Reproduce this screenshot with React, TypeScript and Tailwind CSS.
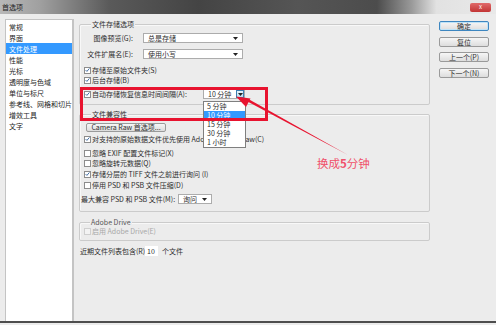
import React from "react";

function Check({ checked, disabled }: { checked?: boolean; disabled?: boolean }) {
  return (
    <span
      className={`w-[7px] h-[7px] border ${
        disabled ? "border-[#cfcfcf] bg-[#f3f3f3]" : "border-[#8c8c8c] bg-white"
      } flex items-center justify-center shrink-0`}
    >
      {checked && (
        <svg width="6" height="6" viewBox="0 0 6 6">
          <path d="M0.7 3.1 L2.3 4.7 L5.3 1.1" stroke="#35649c" strokeWidth="1.1" fill="none" />
        </svg>
      )}
    </span>
  );
}

function Arrow() {
  return (
    <svg width="5" height="3" viewBox="0 0 5 3" className="shrink-0">
      <path d="M0 0 L5 0 L2.5 3 Z" fill="#222" />
    </svg>
  );
}

function CbRow({
  label,
  checked,
  disabled,
  className = "",
}: {
  label: string;
  checked?: boolean;
  disabled?: boolean;
  className?: string;
}) {
  return (
    <div className={`flex items-center h-[10px] pl-[4px] gap-[1px] whitespace-nowrap ${className}`}>
      <Check checked={checked} disabled={disabled} />
      <span className={disabled ? "text-[#a8a8a8]" : ""}>{label}</span>
    </div>
  );
}

function Select({ value, w }: { value: string; w: string }) {
  return (
    <div className={`${w} h-[10px] bg-white border border-[#acacac] flex items-center pl-[4px] pr-[4px]`}>
      <span>{value}</span>
      <span className="ml-auto">
        <Arrow />
      </span>
    </div>
  );
}

function Btn({ label, primary, className = "" }: { label: string; primary?: boolean; className?: string }) {
  return (
    <div
      className={`w-[50px] h-[10px] rounded-[2px] border ${
        primary ? "border-[#3d86c0] shadow-[inset_0_0_0_1px_#bfe3f7]" : "border-[#9a9a9a]"
      } bg-[linear-gradient(#f6f6f6,#dddddd)] flex items-center justify-center leading-none ${className}`}
    >
      {label}
    </div>
  );
}

export default function App() {
  const items = ["常规", "界面", "文件处理", "性能", "光标", "透明度与色域", "单位与标尺", "参考线、网格和切片", "增效工具", "文字"];
  return (
    <div className="relative w-[496px] h-[325px] overflow-hidden bg-[#ececec] text-[7px] leading-[10px] text-[#2e2e2e] font-['Noto_Sans_CJK_SC','Noto_Sans',sans-serif]">
      {/* title bar */}
      <div className="h-[14px] flex items-center bg-[linear-gradient(90deg,#b8b8b8_0%,#a0a0a0_8%,#5a5a5a_22%,#444444_40%,#555555_60%,#4c4c4c_76%,#9a9a9a_83%,#e2e2e2_88%,#e9e9e9_100%)]">
        <span className="pl-[2px] text-[#222]">首选项</span>
        <div className="ml-auto mr-[5px] w-[21px] h-[9px] rounded-[2px] bg-[linear-gradient(#e06a6a,#c23434)] flex items-center justify-center text-white text-[6px] leading-none">
          x
        </div>
      </div>

      {/* body */}
      <div className="flex h-[309px] border-b-2 border-[#4e4e4e]">
        {/* left list */}
        <div className="ml-[5px] mt-[5px] w-[69px] bg-white border-t border-l border-r-2 border-[#c4c4c4] pt-[1px]">
          {items.map((it) => (
            <div
              key={it}
              className={`h-[11px] flex items-center pl-[3px] whitespace-nowrap ${
                it === "文件处理" ? "bg-[#3399ff] text-white" : "text-[#1e1e1e]"
              }`}
            >
              {it}
            </div>
          ))}
        </div>

        {/* main */}
        <div className="ml-[5px] w-[351px] flex flex-col">
          {/* group 1 */}
          <div className="relative mt-[10px] h-[81px] border border-[#cbcbcb] shadow-[inset_1px_1px_0_#f8f8f8] rounded-[2px] flex flex-col">
            <span className="absolute -top-[6px] left-[11px] px-[1px] bg-[#ececec]">文件存储选项</span>
            <div className="mt-[8px] h-[10px] flex items-center">
              <span className="w-[53px] text-right">图像预览(G):</span>
              <div className="ml-[10px]">
                <Select value="总是存储" w="w-[100px]" />
              </div>
            </div>
            <div className="mt-[6px] h-[10px] flex items-center">
              <span className="w-[53px] text-right whitespace-nowrap">文件扩展名(E):</span>
              <div className="ml-[10px]">
                <Select value="使用小写" w="w-[100px]" />
              </div>
            </div>
            <CbRow className="mt-[6px]" checked label="存储至原始文件夹(S)" />
            <CbRow checked label="后台存储(B)" />
            <div className="mt-[4px] flex items-center h-[10px] pl-[4px] gap-[1px] whitespace-nowrap">
              <Check checked />
              <span className="w-[110px]">自动存储恢复信息时间间隔(A):</span>
              <div className="relative w-[42px] h-[10px] bg-white border border-[#acacac] flex items-center pl-[4px]">
                <span>10 分钟</span>
                <span className="ml-auto h-[8px] w-[8px] mr-[0px] border border-[#3c7fb1] bg-[linear-gradient(#e6f3fb,#bcdcf0)] flex items-center justify-center">
                  <Arrow />
                </span>
                {/* open list */}
                <div className="absolute left-[-1px] top-[11px] w-[43px] bg-white border border-[#7f7f7f] z-10 flex flex-col">
                  <div className="h-[9px] leading-[9px] pl-[3px]">5 分钟</div>
                  <div className="h-[9px] leading-[9px] pl-[3px] bg-[#3399ff] text-white">10 分钟</div>
                  <div className="h-[9px] leading-[9px] pl-[3px]">15 分钟</div>
                  <div className="h-[9px] leading-[9px] pl-[3px]">30 分钟</div>
                  <div className="h-[9px] leading-[9px] pl-[3px]">1 小时</div>
                </div>
              </div>
            </div>
          </div>

          {/* group 2 */}
          <div className="relative mt-[9px] h-[98px] border border-[#cbcbcb] shadow-[inset_1px_1px_0_#f8f8f8] rounded-[2px] flex flex-col">
            <span className="absolute -top-[6px] left-[11px] px-[1px] bg-[#ececec]">文件兼容性</span>
            <div className="mt-[8px] ml-[6px] w-[80px] h-[9px] rounded-[2px] border border-[#9a9a9a] bg-[linear-gradient(#f6f6f6,#dcdcdc)] flex items-center justify-center leading-none whitespace-nowrap">
              Camera Raw 首选项...
            </div>
            <CbRow className="mt-[2px]" checked label="对支持的原始数据文件优先使用 Adobe Camera Raw(C)" />
            <CbRow className="mt-[4px]" label="忽略 EXIF 配置文件标记(X)" />
            <CbRow label="忽略旋转元数据(Q)" />
            <CbRow className="mt-[1px]" checked label="存储分层的 TIFF 文件之前进行询问 (I)" />
            <CbRow className="mt-[1px]" label="停用 PSD 和 PSB 文件压缩(D)" />
            <div className="mt-[4px] h-[10px] flex items-center pl-[1px] whitespace-nowrap">
              <span className="w-[97px]">最大兼容 PSD 和 PSB 文件(M):</span>
              <Select value="询问" w="w-[34px]" />
            </div>
          </div>

          {/* group 3 */}
          <div className="relative mt-[10px] h-[19px] border border-[#cbcbcb] shadow-[inset_1px_1px_0_#f8f8f8] rounded-[2px] flex flex-col">
            <span className="absolute -top-[6px] left-[10px] px-[1px] bg-[#ececec] text-[#555]">Adobe Drive</span>
            <CbRow className="mt-[3px]" disabled label="启用 Adobe Drive(E)" />
          </div>

          {/* recent files */}
          <div className="mt-[5px] h-[10px] flex items-center pl-[1px] whitespace-nowrap">
            <span className="w-[65px]">近期文件列表包含(R):</span>
            <div className="w-[13px] h-[10px] bg-white flex items-center pl-[2px]">10</div>
            <span className="ml-[4px]">个文件</span>
          </div>
        </div>

        {/* buttons */}
        <div className="ml-[9px] flex flex-col">
          <Btn className="mt-[7px]" primary label="确定" />
          <Btn className="mt-[6px]" label="复位" />
          <Btn className="mt-[5px]" label="上一个(P)" />
          <Btn className="mt-[6px]" label="下一个(N)" />
        </div>
      </div>

      {/* annotation: red box */}
      <div className="absolute left-[80px] top-[87px] w-[188px] h-[34px] border-[3px] border-[#e8132f] z-20 pointer-events-none" />
      {/* annotation: arrow */}
      <svg className="absolute left-0 top-0 z-20 pointer-events-none" width="496" height="325" viewBox="0 0 496 325">
        <path d="M348 155 L247.5 101.6 L248.8 99.2 Z" fill="#e8132f" />
        <path d="M236 96.5 L250.5 98.5 L246 107 Z" fill="#e8132f" />
      </svg>
      <div className="absolute left-[317px] top-[156px] z-20 text-[11.5px] leading-[14px] text-[#f0506a] whitespace-nowrap">
        换成<span className="font-bold">5</span>分钟
      </div>
    </div>
  );
}
